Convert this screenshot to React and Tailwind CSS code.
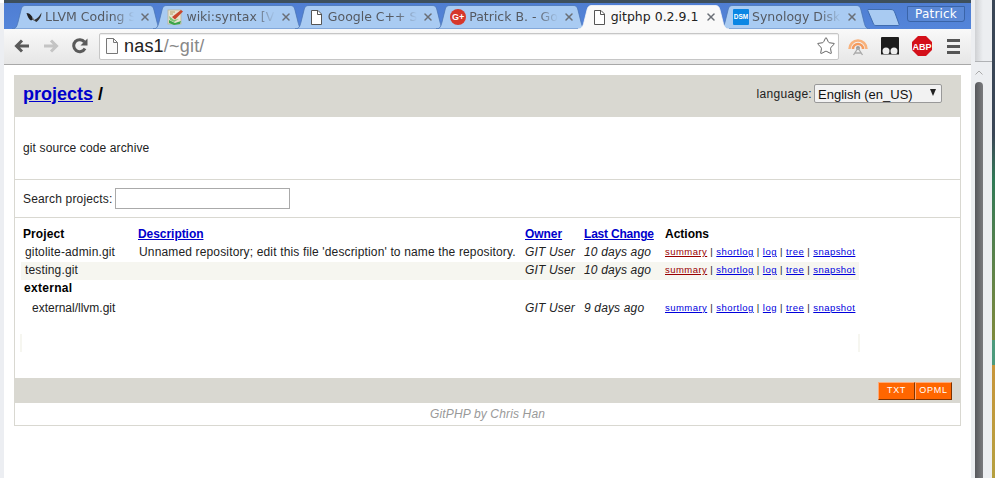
import { Star, X } from "lucide-react";

const PAGE_FONT = "font-['Liberation_Sans',Arial,sans-serif]";

const DocIcon = () => (
  <svg width="15" height="17" viewBox="0 0 15 17" fill="none" stroke="#555" strokeWidth="1">
    <path d="M2.5 1.5h6.5l3.5 3.5v10.5h-10z" fill="#fff" />
    <path d="M8.5 1.5v4h4" />
  </svg>
);

const LlvmIcon = () => (
  <svg width="16" height="14" viewBox="0 0 16 14">
    <path d="M0.5 3c2 0 4 1 5.5 3.5l1 3-2 1C3 9.500 1.500 6.500 0.500 3z" fill="#222" />
    <path d="M15.500 2.500c0 4-2 7-5 9.500L8 10.500l1-1c2.500-1 4.500-3.500 6.500-7z" fill="#333" />
    <path d="M6 7l1.500 4 1-1.500z" fill="#777" />
  </svg>
);

const WikiIcon = () => (
  <svg width="17" height="18" viewBox="0 0 17 18">
    <rect x="1" y="2" width="13" height="14" fill="#e6e2d0" stroke="#b9b39a" strokeWidth="0.8" />
    <path d="M2 12l6 3 6-2-1 3-6 1-5-2z" fill="#3ba54a" />
    <path d="M2 8l5 4 5-1-5 3-4-2z" fill="#7cc576" />
    <path d="M5 9l9-7 2 1.500-8 8z" fill="#c8452c" />
    <path d="M3 4h5M3 6h3" stroke="#b8a06a" strokeWidth="1" />
  </svg>
);

const GplusIcon = () => (
  <span className="flex h-[16px] w-[16px] items-center justify-center rounded-full bg-[#d6372b] font-['Liberation_Sans',sans-serif] text-[9px] font-bold leading-none text-white">
    G+
  </span>
);

const DsmIcon = () => (
  <span className="flex h-[16px] w-[16px] items-center justify-center rounded-[1px] bg-[#0a86e4] font-['Liberation_Sans',sans-serif] text-[6.500px] font-bold leading-none text-white">
    DSM
  </span>
);

const tabs = [
  { title: "LLVM Coding Standards", icon: <LlvmIcon /> },
  { title: "wiki:syntax [Vim wiki]", icon: <WikiIcon /> },
  { title: "Google C++ Style Guide", icon: <DocIcon /> },
  { title: "Patrick B. - Google+", icon: <GplusIcon /> },
  { title: "gitphp 0.2.9.1", icon: <DocIcon />, active: true },
  { title: "Synology DiskStation", icon: <DsmIcon /> },
];

const Tab = ({ title, icon, active }) => (
  <div className={`relative -ml-[9.6px] h-[24px] w-[151px] shrink-0 first:ml-0 ${active ? "z-10" : ""}`}>
    {/* tab shape */}
    <svg className="absolute inset-0" width="151" height="24" viewBox="0 0 151 24">
      <path
        d="M0 24C4 24 5 21 6 17L9 5C10 1.500 11 0.500 14 0.500H137C140 0.500 141 1.500 142 5L145 17C146 21 147 24 151 24Z"
        fill={active ? "#f9f9f9" : "#a9cbf2"}
        stroke={active ? "#f9f9f9" : "#4a75b5"}
        strokeWidth="0.8"
      />
    </svg>
    <div className="relative flex h-full items-center pl-[14px] pr-[12px]">
      <span className="flex w-[19px] shrink-0 items-center">{icon}</span>
      <span
        className={`w-[91px] overflow-hidden whitespace-nowrap font-['DejaVu_Sans',sans-serif] text-[12.500px] leading-[16px] ${
          active ? "text-[#222]" : "text-[#555a62] [mask-image:linear-gradient(to_right,black_75%,transparent_98%)]"
        }`}
      >
        {title}
      </span>
      <X size={12} strokeWidth={3} className="ml-auto text-[#6a6f76]" />
    </div>
  </div>
);

const NavButtons = () => (
  <div className="flex items-center gap-[13px] pl-[10px]">
    <svg width="16" height="14" viewBox="0 0 16 14" fill="none" stroke="#5a5a5a" strokeWidth="3">
      <path d="M15 7H3M8 1.500L2.500 7 8 12.500" />
    </svg>
    <svg width="16" height="14" viewBox="0 0 16 14" fill="none" stroke="#c4c4c4" strokeWidth="3">
      <path d="M1 7h12M8 1.500L13.500 7 8 12.500" />
    </svg>
    <svg width="16" height="16" viewBox="0 0 16 16" fill="none">
      <path d="M13 10.500A6 6 0 1 1 12.500 4" stroke="#5a5a5a" strokeWidth="3" />
      <path d="M15.500 0.500v7h-7z" fill="#5a5a5a" />
    </svg>
  </div>
);

const ExtensionIcons = () => (
  <div className="flex items-center pl-[9px]">
    <svg width="20" height="20" viewBox="0 0 20 20" fill="none" className="mr-[13px]">
      <path d="M1.500 13a8.500 8.500 0 0 1 17 0" stroke="#f8b27c" strokeWidth="2.500" />
      <path d="M5 13a5 5 0 0 1 10 0" stroke="#f59a5c" strokeWidth="2.500" />
      <circle cx="10" cy="12" r="2" fill="#999" />
      <path d="M10 12L5.500 19M10 12l4.500 7M7 17h6" stroke="#aaa" strokeWidth="1.300" />
    </svg>
    <svg width="18" height="18" viewBox="0 0 18 18" className="mr-[13px]">
      <rect width="18" height="18" rx="1" fill="#1c1c1c" />
      <circle cx="5" cy="14" r="3.500" fill="#eee" />
      <circle cx="13" cy="14" r="3.500" fill="#eee" />
      <rect y="17" width="18" height="1" fill="#888" />
    </svg>
    <svg width="20" height="20" viewBox="0 0 20 20" className="mr-[15px]">
      <path d="M6 0h8l6 6v8l-6 6H6l-6-6V6z" fill="#d4101a" />
      <text x="10" y="13.500" textAnchor="middle" fontFamily="Liberation Sans" fontSize="9" fontWeight="700" fill="#fff">
        ABP
      </text>
    </svg>
    <div className="flex flex-col gap-[3px]">
      <span className="h-[3px] w-[13px] bg-[#555]" />
      <span className="h-[3px] w-[13px] bg-[#555]" />
      <span className="h-[3px] w-[13px] bg-[#555]" />
    </div>
  </div>
);

const BrowserChrome = () => (
  <>
    <div className="relative flex h-[26px] bg-gradient-to-b from-[#4f7ed2] to-[#5485da] pl-[8px] pt-[2px]">
      {tabs.map((tab) => (
        <Tab key={tab.title} {...tab} />
      ))}
      <svg className="-ml-[3px] mt-[4px]" width="34" height="17" viewBox="0 0 34 17">
        <path
          d="M1 0.500H24C26 0.500 27 1.500 28 4L32 15C32.300 16 32 16.500 31 16.500H9C7.500 16.500 7 16 6.500 15L1 2C0.600 1 0.600 0.500 1 0.500Z"
          fill="#a9cbf2"
          stroke="#3f6cb0"
        />
      </svg>
      <div className="ml-[6px] mt-[1px] flex h-[16px] w-[58px] items-center justify-center rounded-b-[3px] border border-[#3a64a8] bg-[#5a88d6] font-['DejaVu_Sans',sans-serif] text-[12px] tracking-[0.2px] text-white">
        Patrick
      </div>
    </div>
    <div className="flex h-[36px] items-center border-b border-[#a8a8a8] bg-gradient-to-b from-[#f9f9f9] to-[#e6e6e6] pb-[1px]">
      <NavButtons />
      <div className="ml-[11px] flex h-[27px] w-[740px] items-center rounded-[2px] border border-[#c6c6c6] bg-white pl-[5px] pr-[2px] shadow-[inset_0_1px_1px_rgba(0,0,0,0.08)]">
        <svg width="14" height="16" viewBox="0 0 14 16" fill="none" stroke="#777">
          <path d="M1.500 0.500h7l4 4v11h-11z" fill="#fafafa" />
          <path d="M8.500 0.500v4h4" />
        </svg>
        <span className="ml-[5px] font-['Liberation_Sans',sans-serif] text-[18px] leading-none tracking-[0.2px] text-[#222]">
          nas1<span className="text-[#888]">/~git/</span>
        </span>
        <Star size={20} strokeWidth={1.200} className="ml-auto text-[#666]" />
      </div>
      <ExtensionIcons />
    </div>
  </>
);

const actions = ["summary", "shortlog", "log", "tree", "snapshot"];

const ActionLinks = ({ current }) => (
  <td className="whitespace-nowrap text-[9.500px] tracking-[0.45px]">
    {actions.map((action, i) => (
      <span key={action}>
        {i > 0 && " | "}
        <a href="#" className={`underline ${i === 0 && current ? "text-[#990000]" : "text-[#0000dd]"}`}>
          {action}
        </a>
      </span>
    ))}
  </td>
);

const HeadLink = ({ children, tight }) => (
  <th className={`text-left font-bold ${tight ? "tracking-[-0.2px]" : "tracking-[-0.05px]"}`}>
    <a href="#" className="text-[#0000cc] underline">
      {children}
    </a>
  </th>
);

const ProjectTable = () => (
  <table className="ml-[5px] mt-[8px] w-[838px] table-fixed border-collapse text-[12px] leading-[16px] tracking-[0.15px] text-[#222]">
    <colgroup>
      <col className="w-[117px]" />
      <col className="w-[387px]" />
      <col className="w-[59px]" />
      <col className="w-[81px]" />
      <col className="w-[194px]" />
    </colgroup>
    <tbody>
      <tr className="h-[18px] text-black [&>th]:pb-[2px]">
        <th className="pl-[2px] text-left font-bold tracking-[0.1px]">Project</th>
        <HeadLink>Description</HeadLink>
        <HeadLink>Owner</HeadLink>
        <HeadLink tight>Last Change</HeadLink>
        <th className="text-left font-bold tracking-[0px]">Actions</th>
      </tr>
      <tr className="h-[18px] [&>td]:pb-[2px]">
        <td className="pl-[4px]">gitolite-admin.git</td>
        <td className="whitespace-nowrap pl-[1px]">Unnamed repository; edit this file 'description' to name the repository.</td>
        <td className="whitespace-nowrap italic">GIT User</td>
        <td className="whitespace-nowrap italic">10 days ago</td>
        <ActionLinks current />
      </tr>
      <tr className="h-[18px] bg-[#f6f6f0] [&>td]:pb-[2px]">
        <td className="pl-[4px]">testing.git</td>
        <td />
        <td className="whitespace-nowrap italic">GIT User</td>
        <td className="whitespace-nowrap italic">10 days ago</td>
        <ActionLinks current />
      </tr>
      <tr className="h-[18px] [&>td]:pb-[2px]">
        <td colSpan={5} className="pl-[3px] font-bold tracking-[0.3px] text-black">
          external
        </td>
      </tr>
      <tr className="h-[19px]">
        <td className="whitespace-nowrap pl-[11px] tracking-[0px]">external/llvm.git</td>
        <td />
        <td className="whitespace-nowrap italic">GIT User</td>
        <td className="whitespace-nowrap italic">9 days ago</td>
        <ActionLinks />
      </tr>
      <tr className="h-[17px]">
        <td colSpan={5} />
      </tr>
      <tr className="h-[18px]">
        <td colSpan={5} className="border-x-[2px] border-[#f6f6f0]" />
      </tr>
    </tbody>
  </table>
);

const PageFooterButton = ({ children }) => (
  <a
    href="#"
    className="flex h-[18px] w-[37px] items-center justify-center border border-b-[#7d3302] border-l-[#ffaa77] border-r-[#7d3302] border-t-[#ffaa77] bg-[#ff6600] text-[9px] tracking-[0.7px] text-white"
  >
    {children}
  </a>
);

const Page = () => (
  <div className="min-h-0 flex-1 overflow-hidden bg-white px-[10px] pt-[10px]">
    <div className={`border border-[#d9d8d1] text-[12px] text-[#222] ${PAGE_FONT}`}>
      <div className="flex h-[41px] items-center justify-between bg-[#d9d8d1] pb-[5px] pl-[8px] pr-[18px]">
        <div className="text-[18px] font-bold text-black">
          <a href="#" className="text-[#0000cc] underline">
            projects
          </a>{" "}
          /
        </div>
        <div className="flex items-center gap-[2px]">
          <span className="tracking-[0.3px]">language:</span>
          <div className="relative">
            <select className="h-[19px] w-[128px] appearance-none rounded-[2px] border border-[#999] bg-[#f2f2f2] pl-[3px] text-[13px] text-[#111]">
              <option>English (en_US)</option>
            </select>
            <span className="absolute right-[6px] top-[5px] h-0 w-0 border-x-[3.500px] border-t-[7px] border-x-transparent border-t-[#222]" />
          </div>
        </div>
      </div>
      <div className="flex h-[63px] items-center border-b border-[#d9d8d1] pl-[8px] tracking-[0.13px]">git source code archive</div>
      <div className="flex h-[38px] items-center gap-[3px] border-b border-[#d9d8d1] pl-[8px] tracking-[0.17px]">
        <span>Search projects:</span>
        <input className="h-[21px] w-[175px] border border-[#aaa] bg-white" />
      </div>
      <ProjectTable />
      <div className="mt-[26px] flex h-[25px] items-center justify-end bg-[#d9d8d1] pr-[8px]">
        <PageFooterButton>TXT</PageFooterButton>
        <PageFooterButton>OPML</PageFooterButton>
      </div>
      <div className="flex h-[22px] items-center justify-center italic tracking-[0.15px] text-[#999]">GitPHP by Chris Han</div>
    </div>
  </div>
);

const Scrollbar = () => (
  <div className="flex w-[21px] shrink-0 bg-[#eceef1]">
    <div className="w-[4px] shrink-0" />
    <div className="flex w-[8px] shrink-0 flex-col">
      <div className="h-[61px] bg-gradient-to-r from-[#cfd1d4] to-[#eceef1]" />
      <div className="h-[1px] bg-[#b0b2b5]" />
      <div className="flex h-[20px] justify-center pt-[8px]">
        <svg width="8" height="5" viewBox="0 0 8 5" fill="none" stroke="#aaa">
          <path d="M0.500 4.500L4 1l3.500 3.500" />
        </svg>
      </div>
      <div className="flex-1 rounded-t-[4px] bg-gradient-to-r from-[#58595d] to-[#7a7b7e]" />
    </div>
    <div className="flex flex-1 flex-col">
      <div className="mt-[61px] h-[1px] bg-[#b0b2b5]" />
    </div>
  </div>
);

const Wallpaper = () => (
  <div className="flex w-[3px] shrink-0 flex-col">
    <div className="h-[135px] bg-[#3a4656]" />
    <div className="h-[45px] bg-gradient-to-b from-[#3a4656] to-[#2f7a56]" />
    <div className="h-[160px] bg-gradient-to-b from-[#2f7a56] to-[#7d8a3c]" />
    <div className="h-[25px] bg-[#4c9a7c]" />
    <div className="flex-1 bg-gradient-to-b from-[#c8953a] to-[#b5a040]" />
  </div>
);

export default function App() {
  return (
    <div className="flex h-[478px] w-[995px] overflow-hidden bg-white">
      <div className="mt-[3px] w-[4px] shrink-0 bg-[#eceef2]" />
      <div className="flex min-w-0 flex-1 flex-col">
        <div className="h-[3px] shrink-0 bg-[#3d4f5c]" />
        <BrowserChrome />
        <Page />
      </div>
      <Scrollbar />
      <Wallpaper />
    </div>
  );
}
